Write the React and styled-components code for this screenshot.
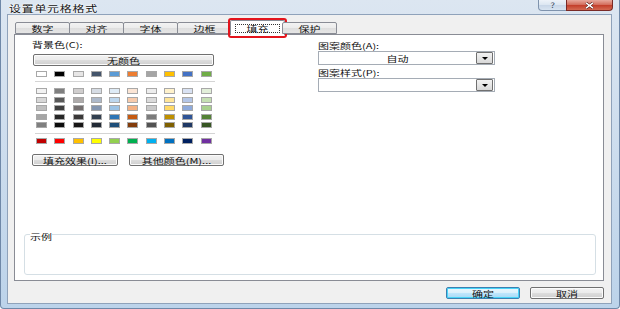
import React from "react";
import styled, { createGlobalStyle, css } from "styled-components";

const Global = createGlobalStyle`
  html, body { margin: 0; padding: 0; background: #ffffff; }
  body { font-family: "Noto Sans CJK SC", "Liberation Sans", sans-serif; }
  * { box-sizing: border-box; }
`;

const squash = css`
  display: inline-block;
  transform: scaleY(0.72);
  line-height: 1;
  white-space: nowrap;
`;

const T = styled.span`
  ${squash}
  font-size: ${(p) => p.$size || 11}px;
  color: ${(p) => p.$color || "#111111"};
  letter-spacing: ${(p) => p.$ls || 0}px;
`;

const Window = styled.div`
  width: 620px;
  height: 309px;
  background: linear-gradient(to bottom, #dce6f1 0%, #cfdeee 40%, #bcd3ea 100%);
  border-left: 1px solid #6f88a8;
  border-right: 1px solid #6f88a8;
  border-bottom: 1px solid #6f88a8;
  border-radius: 0 0 4px 4px;
  padding: 0 7px 4px 6px;
  display: flex;
  flex-direction: column;
  overflow: hidden;
`;

const TitleBar = styled.div`
  height: 14px;
  display: flex;
  align-items: flex-start;
  justify-content: space-between;
  padding-left: 2px;
`;

const Title = styled.div`
  height: 14px;
  display: flex;
  align-items: center;
  padding-top: 1px;
  text-shadow: 0 0 4px #ffffff, 0 0 2px #ffffff;
`;

const Caption = styled.div`
  display: flex;
  height: 11px;
  margin-right: -1px;
`;

const CaptionBtn = styled.div`
  width: ${(p) => p.$w}px;
  height: 11px;
  display: flex;
  align-items: center;
  justify-content: center;
  border: 1px solid ${(p) => (p.$close ? "#7a2a26" : "#7f93ad")};
  border-top: none;
  border-radius: ${(p) => (p.$close ? "0 0 4px 0" : "0 0 0 4px")};
  background: ${(p) =>
    p.$close
      ? "linear-gradient(to bottom, #e8a99d 0%, #d4705f 45%, #c4402c 55%, #d46a52 100%)"
      : "linear-gradient(to bottom, #eef3f9 0%, #dde7f2 45%, #c9d7e8 55%, #d8e4f1 100%)"};
  margin-left: ${(p) => (p.$close ? "-1px" : "0")};
`;

const Client = styled.div`
  flex: 1;
  background: #f0f0f0;
  border: 1px solid #8fa2ba;
  display: flex;
  flex-direction: column;
  padding: 5px 7px 0 6px;
`;

const TabStrip = styled.div`
  display: flex;
  align-items: flex-end;
  height: 14px;
  padding-left: 1px;
  position: relative;
  z-index: 2;
`;

const Tab = styled.div`
  width: 55px;
  height: ${(p) => (p.$active ? 15 : 12)}px;
  margin-left: ${(p) => (p.$active ? -2 : -1)}px;
  margin-right: ${(p) => (p.$active ? -2 : 0)}px;
  margin-bottom: ${(p) => (p.$active ? -1 : 0)}px;
  border: 1px solid #898c95;
  border-bottom: ${(p) => (p.$active ? "none" : "1px solid #898c95")};
  border-radius: 2px 2px 0 0;
  background: ${(p) =>
    p.$active ? "#ffffff" : "linear-gradient(to bottom, #f3f3f3 0%, #ebebeb 50%, #dedede 51%, #e5e5e5 100%)"};
  display: flex;
  align-items: center;
  justify-content: center;
  position: relative;
  &:first-child { margin-left: 0; }
`;

const Focus = styled.div`
  border: 1px dotted #333;
  width: 45px;
  height: 9px;
  display: flex;
  align-items: center;
  justify-content: center;
`;

const Marker = styled.div`
  position: absolute;
  left: -3px;
  right: -3px;
  top: -3px;
  bottom: -3px;
  border: 2px solid #e3141c;
  border-radius: 3px;
  pointer-events: none;
`;

const Panel = styled.div`
  height: 247px;
  background: #ffffff;
  border: 1px solid #898c95;
  display: flex;
  flex-direction: column;
  position: relative;
  z-index: 1;
`;

const PanelTop = styled.div`
  display: flex;
  padding-left: 17px;
`;

const LeftCol = styled.div`
  width: 286px;
  display: flex;
  flex-direction: column;
`;

const RightCol = styled.div`
  width: 177px;
  display: flex;
  flex-direction: column;
`;

const Label = styled.div`
  height: 10px;
  display: flex;
  align-items: center;
  margin-top: ${(p) => p.$mt || 0}px;
`;

const WideButton = styled.div`
  margin-top: 5px;
  margin-left: 1px;
  width: 181px;
  height: 12px;
  border: 1px solid #707070;
  border-radius: 2px;
  box-shadow: inset 0 0 0 1px #fcfcfc;
  background: linear-gradient(to bottom, #f2f2f2 0%, #ebebeb 50%, #dddddd 51%, #cfcfcf 100%);
  display: flex;
  align-items: center;
  justify-content: center;
`;

const SwatchRow = styled.div`
  display: grid;
  grid-template-columns: repeat(10, 18.3px);
  margin-left: 4px;
  margin-top: ${(p) => p.$mt || 0}px;
`;

const Swatch = styled.div`
  width: 11px;
  height: ${(p) => p.$h || 6}px;
  border: 1px solid #a8a8a8;
  background: ${(p) => p.$c};
`;

const Sep = styled.div`
  width: 180px;
  height: 1px;
  margin-left: 3px;
  margin-top: ${(p) => p.$mt}px;
  background: #d4d4d4;
`;

const ButtonRow = styled.div`
  display: flex;
  gap: 11px;
  margin-top: 10px;
`;

const Button = styled.div`
  width: ${(p) => p.$w}px;
  height: 12px;
  border: 1px solid ${(p) => (p.$default ? "#3c7fb1" : "#707070")};
  border-radius: 2px;
  box-shadow: inset 0 0 0 1px ${(p) => (p.$default ? "#48d4f8" : "#fbfbfb")};
  background: ${(p) =>
    p.$default
      ? "linear-gradient(to bottom, #eaf6fd 0%, #d9f0fc 50%, #bee6fd 51%, #a7d9f5 100%)"
      : "linear-gradient(to bottom, #f2f2f2 0%, #ebebeb 50%, #dddddd 51%, #cfcfcf 100%)"};
  display: flex;
  align-items: center;
  justify-content: center;
`;

const Select = styled.div`
  margin-top: ${(p) => p.$mt || 0}px;
  width: 177px;
  height: 14px;
  border: 1px solid #a5acb5;
  background: #fff;
  display: flex;
  align-items: center;
`;

const SelectValue = styled.div`
  flex: 1;
  display: flex;
  justify-content: center;
`;

const DropBtn = styled.div`
  width: 17px;
  height: 12px;
  margin-right: 1px;
  border: 1px solid #707070;
  border-radius: 1px;
  background: linear-gradient(to bottom, #f2f2f2 0%, #e6e6e6 50%, #d8d8d8 100%);
  display: flex;
  align-items: center;
  justify-content: center;
`;

const Arrow = styled.div`
  width: 0;
  height: 0;
  border-left: 3px solid transparent;
  border-right: 3px solid transparent;
  border-top: 3px solid #000;
`;

const Spacer = styled.div`
  flex: 1;
`;

const GroupBox = styled.fieldset`
  margin: 0 7px 5px 9px;
  height: 46px;
  border: 1px solid #d5dfe5;
  border-radius: 3px;
  padding: 0;
  min-width: 0;
`;

const Legend = styled.legend`
  padding: 0;
  margin-left: 5px;
  height: 10px;
  line-height: 10px;
`;

const Footer = styled.div`
  display: flex;
  justify-content: flex-end;
  gap: 10px;
  margin-top: 6px;
  padding-right: 0;
`;

const theme = ["#ffffff", "#000000", "#e7e6e6", "#44546a", "#5b9bd5", "#ed7d31", "#a5a5a5", "#ffc000", "#4472c4", "#70ad47"];
const tints = [
  ["#f2f2f2", "#7f7f7f", "#d0cece", "#d6dce4", "#deebf6", "#fbe5d5", "#ededed", "#fff2cc", "#d9e2f3", "#e2efd9"],
  ["#d8d8d8", "#595959", "#aeabab", "#adb9ca", "#bdd7ee", "#f7cbac", "#dbdbdb", "#fee599", "#b4c6e7", "#c5e0b3"],
  ["#bfbfbf", "#3f3f3f", "#757070", "#8496b0", "#9cc3e5", "#f4b183", "#c9c9c9", "#ffd965", "#8eaadb", "#a8d08d"],
  ["#a5a5a5", "#262626", "#3a3838", "#323f4f", "#2e75b5", "#c55a11", "#7b7b7b", "#bf9000", "#2f5496", "#538135"],
  ["#7f7f7f", "#0c0c0c", "#171616", "#222a35", "#1e4e79", "#833c0b", "#525252", "#7f6000", "#1f3864", "#375623"],
];
const standard = ["#c00000", "#ff0000", "#ffc000", "#ffff00", "#92d050", "#00b050", "#00b0f0", "#0070c0", "#002060", "#7030a0"];

const tabs = ["数字", "对齐", "字体", "边框", "填充", "保护"];

export default function App() {
  return (
    <>
      <Global />
      <Window>
        <TitleBar>
          <Title>
            <T $size={12} $ls={0.7} $color="#111">设置单元格格式</T>
          </Title>
          <Caption>
            <CaptionBtn $w={29}>
              <T $size={10} $color="#3b4a5e">?</T>
            </CaptionBtn>
            <CaptionBtn $w={47} $close>
              <svg width="11" height="7" viewBox="0 0 11 7">
                <path d="M2 0.8 L9 6.2 M9 0.8 L2 6.2" stroke="#4b1410" strokeWidth="2.6" />
                <path d="M2 0.8 L9 6.2 M9 0.8 L2 6.2" stroke="#ffffff" strokeWidth="1.5" />
              </svg>
            </CaptionBtn>
          </Caption>
        </TitleBar>
        <Client>
          <TabStrip>
            {tabs.map((t) => {
              const active = t === "填充";
              return (
                <Tab key={t} $active={active}>
                  {active ? (
                    <>
                      <Focus>
                        <T $size={11}>{t}</T>
                      </Focus>
                      <Marker />
                    </>
                  ) : (
                    <T $size={11}>{t}</T>
                  )}
                </Tab>
              );
            })}
          </TabStrip>
          <Panel>
            <PanelTop>
              <LeftCol>
                <Label $mt={4}>
                  <T>背景色(C):</T>
                </Label>
                <WideButton>
                  <T>无颜色</T>
                </WideButton>
                <SwatchRow $mt={5}>
                  {theme.map((c) => (
                    <Swatch key={c} $c={c} />
                  ))}
                </SwatchRow>
                <Sep $mt={4} />
                {tints.map((row, i) => (
                  <SwatchRow key={i} $mt={i === 0 ? 6 : 2.5}>
                    {row.map((c, j) => (
                      <Swatch key={j} $c={c} />
                    ))}
                  </SwatchRow>
                ))}
                <Sep $mt={5} />
                <SwatchRow $mt={4}>
                  {standard.map((c) => (
                    <Swatch key={c} $c={c} />
                  ))}
                </SwatchRow>
                <ButtonRow>
                  <Button $w={86}>
                    <T>填充效果(I)...</T>
                  </Button>
                  <Button $w={95}>
                    <T>其他颜色(M)...</T>
                  </Button>
                </ButtonRow>
              </LeftCol>
              <RightCol>
                <Label $mt={5}>
                  <T>图案颜色(A):</T>
                </Label>
                <Select $mt={1}>
                  <SelectValue>
                    <T>自动</T>
                  </SelectValue>
                  <DropBtn>
                    <Arrow />
                  </DropBtn>
                </Select>
                <Label $mt={2}>
                  <T>图案样式(P):</T>
                </Label>
                <Select $mt={1}>
                  <SelectValue />
                  <DropBtn>
                    <Arrow />
                  </DropBtn>
                </Select>
              </RightCol>
            </PanelTop>
            <Spacer />
            <GroupBox>
              <Legend>
                <T>示例</T>
              </Legend>
            </GroupBox>
          </Panel>
          <Footer>
            <Button $w={74} $default>
              <T>确定</T>
            </Button>
            <Button $w={74}>
              <T>取消</T>
            </Button>
          </Footer>
        </Client>
      </Window>
    </>
  );
}
